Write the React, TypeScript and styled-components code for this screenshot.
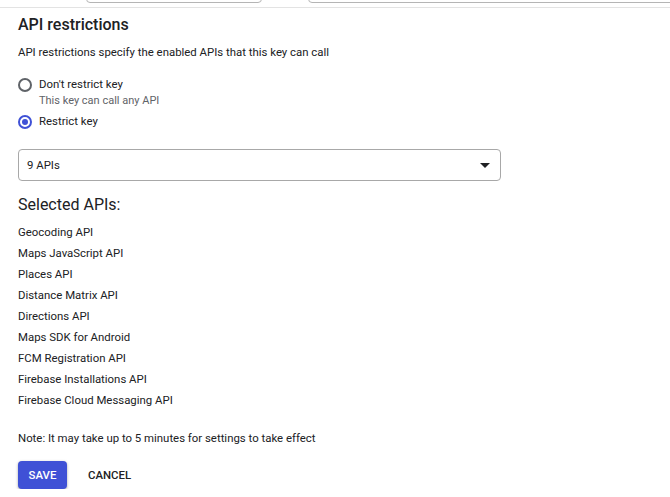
import styled, { createGlobalStyle } from 'styled-components';

const GlobalStyle = createGlobalStyle`
  html, body {
    margin: 0;
    padding: 0;
    background: #fff;
  }
  body {
    font-family: Roboto, "Noto Sans", "Liberation Sans", sans-serif;
    color: #202124;
  }
`;

const apis = [
  'Geocoding API',
  'Maps JavaScript API',
  'Places API',
  'Distance Matrix API',
  'Directions API',
  'Maps SDK for Android',
  'FCM Registration API',
  'Firebase Installations API',
  'Firebase Cloud Messaging API',
];

const App = () => {
  return (
    <>
      <GlobalStyle />
      <TopStrip>
        <Fields>
          <Field $left={86} $width={176} />
          <Field $left={46} $width={400} />
        </Fields>
      </TopStrip>
      <Page>
        <Title>API restrictions</Title>
        <Subtitle>API restrictions specify the enabled APIs that this key can call</Subtitle>
        <Radios>
          <RadioRow>
            <Radio $checked={false} />
            <div>
              <RadioLabel>Don't restrict key</RadioLabel>
              <RadioHint>This key can call any API</RadioHint>
            </div>
          </RadioRow>
          <RadioRow>
            <Radio $checked />
            <RadioLabel>Restrict key</RadioLabel>
          </RadioRow>
        </Radios>
        <Select>
          <span>9 APIs</span>
          <Caret />
        </Select>
        <SectionTitle>Selected APIs:</SectionTitle>
        <ApiList>
          {apis.map((api) => (
            <li key={api}>{api}</li>
          ))}
        </ApiList>
        <Note>Note: It may take up to 5 minutes for settings to take effect</Note>
        <Actions>
          <SaveButton>SAVE</SaveButton>
          <CancelButton>CANCEL</CancelButton>
        </Actions>
      </Page>
    </>
  );
};

const TopStrip = styled.div`
  height: 8px;
  border-bottom: 1px solid #e3e3e3;
  box-sizing: border-box;
`;

const Fields = styled.div`
  height: 3px;
  display: flex;
  align-items: flex-end;
  overflow: hidden;
`;

const Field = styled.div<{ $left: number; $width: number }>`
  flex: none;
  margin-left: ${(p) => p.$left}px;
  width: ${(p) => p.$width}px;
  height: 20px;
  border: 1px solid #b5b5b5;
  border-radius: 4px;
  box-sizing: border-box;
`;

const Page = styled.div`
  padding: 5px 18px 0;
`;

const Title = styled.h2`
  margin: 0;
  font-size: 16px;
  font-weight: 500;
  line-height: 24px;
  color: #202124;
`;

const Subtitle = styled.p`
  margin: 6px 0 0;
  font-size: 11.4px;
  line-height: 18px;
  color: #202124;
`;

const Radios = styled.div`
  margin-top: 15px;
  display: flex;
  flex-direction: column;
  gap: 4px;
`;

const RadioRow = styled.div`
  display: flex;
  align-items: flex-start;
  gap: 7px;
`;

const Radio = styled.span<{ $checked: boolean }>`
  flex: none;
  width: 14px;
  height: 14px;
  margin-top: 1.5px;
  border-radius: 50%;
  border: 2px solid ${(p) => (p.$checked ? '#3f51d6' : '#5f6368')};
  box-sizing: border-box;
  display: flex;
  align-items: center;
  justify-content: center;

  &::after {
    content: '';
    display: ${(p) => (p.$checked ? 'block' : 'none')};
    width: 6px;
    height: 6px;
    border-radius: 50%;
    background: #3f51d6;
  }
`;

const RadioLabel = styled.div`
  font-size: 11.4px;
  line-height: 17px;
  color: #202124;
`;

const RadioHint = styled.div`
  font-size: 11px;
  line-height: 16px;
  color: #5f6368;
`;

const Select = styled.div`
  margin-top: 19px;
  width: 483px;
  height: 32px;
  box-sizing: border-box;
  border: 1px solid #a8a8a8;
  border-radius: 4px;
  padding: 0 10px 0 8px;
  display: flex;
  align-items: center;
  justify-content: space-between;
  font-size: 11.4px;
  color: #202124;
`;

const Caret = styled.span`
  width: 0;
  height: 0;
  border-left: 5px solid transparent;
  border-right: 5px solid transparent;
  border-top: 5px solid #202124;
`;

const SectionTitle = styled.h3`
  margin: 14px 0 0;
  font-size: 16px;
  font-weight: 400;
  line-height: 20px;
  color: #202124;
`;

const ApiList = styled.ul`
  list-style: none;
  margin: 7px 0 0;
  padding: 0;

  li {
    font-size: 11.4px;
    line-height: 21px;
    color: #202124;
  }
`;

const Note = styled.p`
  margin: 18px 0 0;
  font-size: 11.4px;
  line-height: 18px;
  color: #202124;
`;

const Actions = styled.div`
  margin-top: 14px;
  display: flex;
  align-items: center;
  gap: 21px;
`;

const SaveButton = styled.button`
  width: 49px;
  height: 28px;
  border: none;
  border-radius: 4px;
  background: #3f51d6;
  color: #fff;
  font-family: inherit;
  font-size: 11.4px;
  font-weight: 500;
  box-shadow: 0 1px 3px rgba(0, 0, 0, 0.35);
  padding: 0;
`;

const CancelButton = styled.button`
  border: none;
  background: none;
  color: #202124;
  font-family: inherit;
  font-size: 11.4px;
  font-weight: 500;
  padding: 0;
`;

export default App;
